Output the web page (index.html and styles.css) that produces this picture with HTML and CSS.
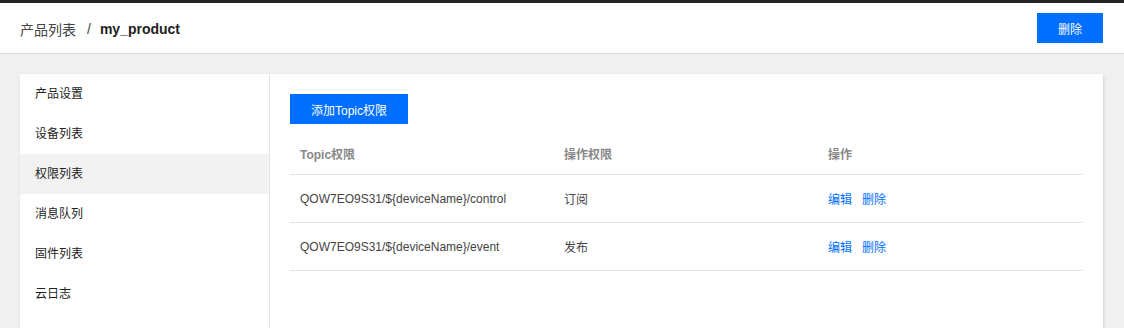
FILE: index.html
```html
<!DOCTYPE html>
<html lang="zh">
<head>
<meta charset="utf-8">
<link rel="stylesheet" href="styles.css">
</head>
<body>
<div class="topline"></div>
<header class="header">
  <div class="crumb">
    <span class="crumb-link">产品列表</span>
    <span class="crumb-sep">/</span>
    <span class="crumb-cur">my_product</span>
  </div>
  <button class="btn">删除</button>
</header>
<main class="main">
  <div class="card">
    <nav class="side">
      <div class="side-item">产品设置</div>
      <div class="side-item">设备列表</div>
      <div class="side-item active">权限列表</div>
      <div class="side-item">消息队列</div>
      <div class="side-item">固件列表</div>
      <div class="side-item">云日志</div>
    </nav>
    <section class="content">
      <button class="btn btn-add">添加Topic权限</button>
      <div class="table">
        <div class="row head">
          <div class="cell">Topic权限</div>
          <div class="cell">操作权限</div>
          <div class="cell">操作</div>
        </div>
        <div class="row">
          <div class="cell">QOW7EO9S31/${deviceName}/control</div>
          <div class="cell">订阅</div>
          <div class="cell"><a class="link">编辑</a><a class="link">删除</a></div>
        </div>
        <div class="row">
          <div class="cell">QOW7EO9S31/${deviceName}/event</div>
          <div class="cell">发布</div>
          <div class="cell"><a class="link">编辑</a><a class="link">删除</a></div>
        </div>
      </div>
    </section>
  </div>
</main>
</body>
</html>
```
FILE: styles.css
```css
* { box-sizing: border-box; }
html, body {
  margin: 0;
  padding: 0;
  background: #f0f0f0;
  font-family: "Liberation Sans", "Noto Sans CJK SC", sans-serif;
  font-size: 12px;
  color: #444;
  overflow: hidden;
}
.topline { height: 3px; background: #222; }
.header {
  height: 51px;
  background: #fff;
  border-bottom: 1px solid #ddd;
  display: flex;
  align-items: center;
  justify-content: space-between;
  padding: 0 21px 0 20px;
}
.crumb { display: flex; align-items: center; font-size: 14px; margin-top: 2px; }
.crumb-link { color: #444; }
.crumb-sep { color: #444; margin: 0 9px 0 11px; }
.crumb-cur { color: #222; font-weight: bold; }
.btn {
  border: 0;
  background: #006eff;
  color: #fff;
  font-family: inherit;
  font-size: 12px;
  height: 30px;
  width: 66px;
  padding: 0;
  cursor: pointer;
}
.main { padding: 20px 20px 0 20px; }
.card {
  background: #fff;
  display: flex;
  min-height: 300px;
  box-shadow: 1px 1px 3px rgba(0,0,0,0.12);
  width: 1083px;
}
.side {
  width: 250px;
  border-right: 1px solid #e5e5e5;
  flex: none;
}
.side-item {
  height: 40px;
  line-height: 40px;
  padding-left: 15px;
  color: #222;
}
.side-item.active { background: #f2f2f2; }
.content { flex: 1; padding: 20px; }
.btn-add { width: 118px; }
.table { margin-top: 8px; }
.row {
  display: grid;
  grid-template-columns: 264px 264px 1fr;
  height: 48px;
  align-items: center;
  border-bottom: 1px solid #e5e5e5;
}
.row.head { height: 43px; color: #888; font-weight: bold; }
.cell { padding-left: 10px; }
.link { color: #006eff; margin-right: 10px; cursor: pointer; }
```
